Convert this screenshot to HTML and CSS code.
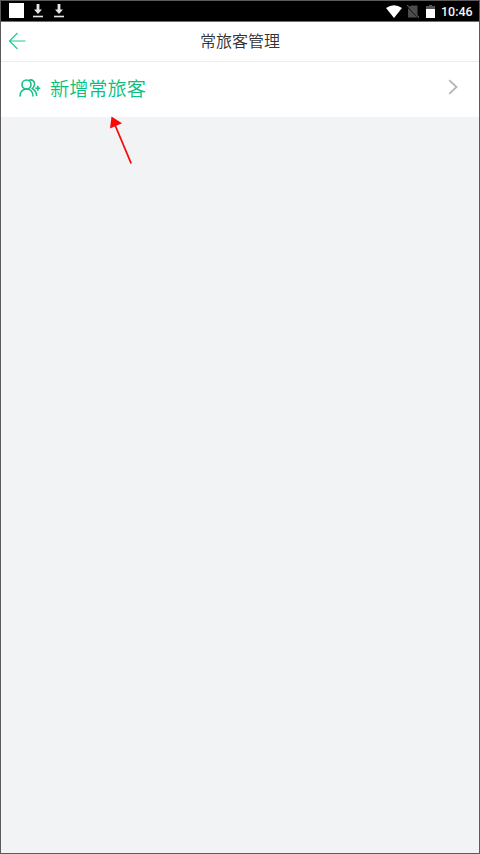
FILE: index.html
```html
<!DOCTYPE html>
<html lang="zh-CN">
<head>
<meta charset="utf-8">
<title>常旅客管理</title>
<link rel="stylesheet" href="styles.css">
</head>
<body>
<div class="screen">
  <div class="status">
    <div class="status-left">
      <span class="square"></span>
      <svg class="download" viewBox="0 0 12 16"><path d="M4.600 1h2.800v5.500H10L6 11 2 6.500h2.600z"/><path d="M1 12.700h10v1.600H1z"/></svg>
      <svg class="download" viewBox="0 0 12 16"><path d="M4.600 1h2.800v5.500H10L6 11 2 6.500h2.600z"/><path d="M1 12.700h10v1.600H1z"/></svg>
    </div>
    <div class="status-right">
      <svg class="wifi" viewBox="0 0 16 13"><path d="M0 3Q8-2.500 16 3L8 13z"/></svg>
      <svg class="sim" viewBox="0 0 12 13"><path class="sim-body" d="M4 .5h6.500v12H1V3.500z"/><path class="sim-gap" d="M0 1l12 12"/><path class="sim-slash" d="M0 0l12 12.500"/></svg>
      <svg class="battery" viewBox="0 0 9 13"><path class="battery-top" d="M3 0h3v1h3v3H0V1h3z"/><path class="battery-fill" d="M0 4h9v9H0z"/></svg>
      <span class="clock">10:46</span>
    </div>
  </div>
  <header class="bar">
    <svg class="back" viewBox="0 0 18 18"><path d="M17.500 9H1.500M9.500 1L1.500 9l8 8"/></svg>
    <h1 class="title">常旅客管理</h1>
  </header>
  <main class="content">
    <div class="row">
      <svg class="people" viewBox="0 0 22 18">
        <circle cx="7.500" cy="5.500" r="4.500"/>
        <path d="M1 17.500C1 13 3.500 10 7.500 10s6.500 3 6.500 7.500M10 1.200C13.500 0 16 2.500 15.500 5.500c-.2 1.800-1 3-2.200 4 2.700 1.500 4.200 4 4.400 7.500"/>
        <path class="plus" d="M18.800 6.800v5M16.300 9.300h5"/>
      </svg>
      <span class="label">新增常旅客</span>
      <svg class="chevron" viewBox="0 0 10 16"><path d="M1.200 1.200L8.500 8l-7.300 6.800"/></svg>
    </div>
  </main>
  <svg class="pointer" viewBox="0 0 26 50"><path class="pointer-line" d="M23.200 47.500L7 9"/><path class="pointer-head" d="M3.500 .5L14 7.200 2 12.500z"/></svg>
</div>
</body>
</html>
```
FILE: styles.css
```css
* { box-sizing: border-box; }
body { margin: 0; font-family: "Noto Sans CJK SC", sans-serif; }
svg { display: block; flex: none; }
.screen {
  position: relative;
  display: flex;
  flex-direction: column;
  width: 480px;
  height: 854px;
  border: 1px solid #5c5a5b;
  background: #f2f3f5;
}
.status {
  display: flex;
  justify-content: space-between;
  height: 20px;
  padding: 0 6px 0 7.5px;
  background: #000;
}
.status-left, .status-right { display: flex; align-items: center; }
.status-left { gap: 9px; }
.square { width: 15px; height: 15px; margin-right: -1px; margin-bottom: 1px; background: #fff; }
.download { width: 12px; height: 16px; fill: #e5e5e5; }
.wifi { width: 16px; height: 13px; margin-right: 5px; fill: #fff; }
.sim { width: 12px; height: 13px; margin-right: 7px; fill: none; }
.sim-body { fill: #4c4c4c; }
.sim-gap { stroke: #000; stroke-width: 1.5; }
.sim-slash { stroke: #5c5c5c; stroke-width: 1.2; }
.battery { width: 9px; height: 13px; margin-right: 6px; }
.battery-top { fill: #555; }
.battery-fill { fill: #fff; }
.clock { font: 500 12.5px/20px Roboto, sans-serif; color: #f5f5f5; width: 32px; padding-top: 1px; white-space: nowrap; }
.bar {
  display: grid;
  grid-template-columns: 60px 1fr 60px;
  align-items: center;
  height: 41px;
  background: #fff;
  border-top: 1px solid #6e6e6e;
  border-bottom: 1px solid #ebeced;
}
.back { width: 18px; height: 18px; margin-left: 7px; margin-bottom: 2px; fill: none; stroke: #20c997; stroke-width: 1.2; }
.title { margin: 0; padding-bottom: 3px; text-align: center; font-size: 16px; line-height: 24px; font-weight: 350; color: #333; }
.row { display: flex; align-items: center; height: 55px; padding: 0 21px 0 18px; background: #fff; }
.people { width: 22px; height: 18px; margin-right: 9px; margin-bottom: 3px; fill: none; stroke: #12c286; stroke-width: 1.6; }
.label { flex: 1; padding-bottom: 4px; font-size: 19.2px; font-weight: 350; line-height: 28px; color: #08bf80; }
.chevron { width: 10px; height: 16px; margin-bottom: 5px; fill: none; stroke: #b5b5b5; stroke-width: 1.8; }
.pointer { position: absolute; left: 106.5px; top: 115px; width: 26px; height: 50px; }
.pointer-line { stroke: #f90808; stroke-width: 1.8; }
.pointer-head { fill: #f90808; }
```
